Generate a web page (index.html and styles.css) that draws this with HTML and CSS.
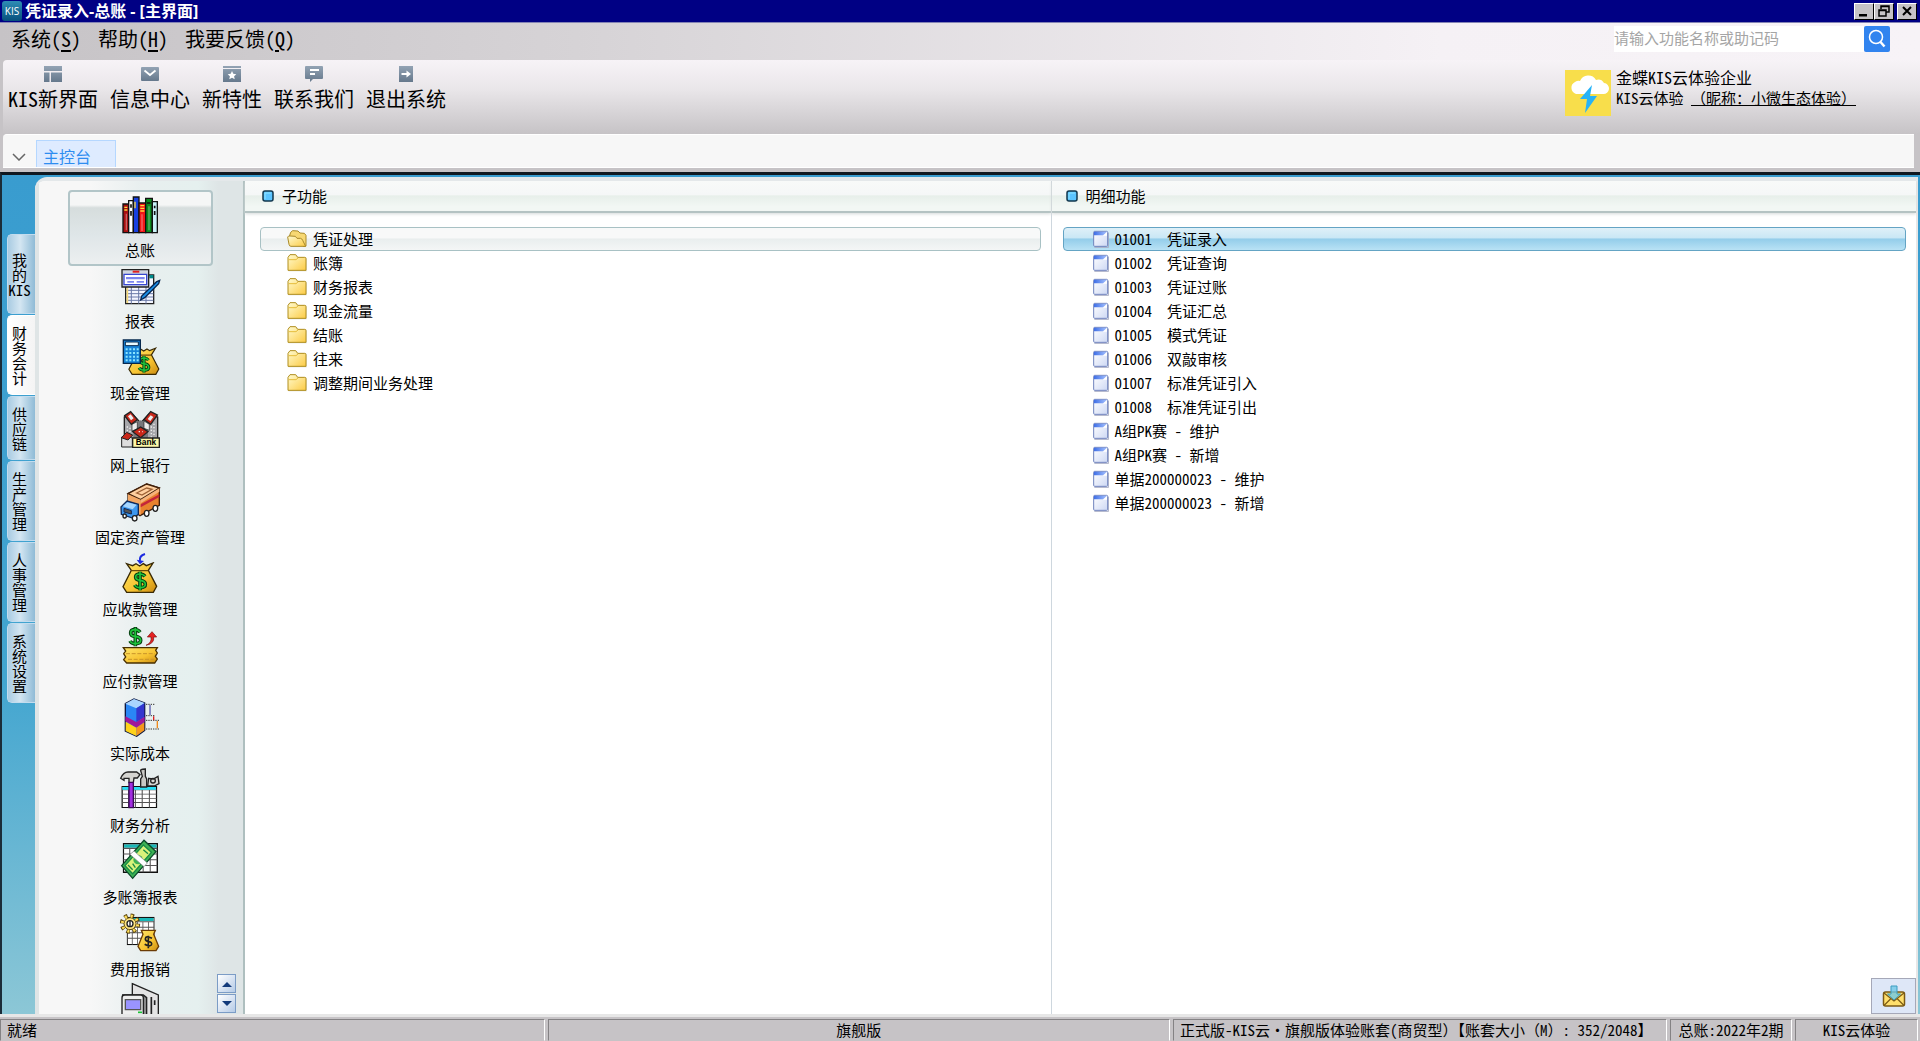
FILE: index.html
```html
<!DOCTYPE html>
<html lang="zh-CN">
<head>
<meta charset="utf-8">
<title>凭证录入-总账 - [主界面]</title>
<link rel="stylesheet" href="styles.css">
</head>
<body>
<svg class="defs" aria-hidden="true">
  <defs>
    <linearGradient id="slate" x1="0" y1="0" x2="0" y2="1"><stop offset="0" stop-color="#93a3b4"/><stop offset="1" stop-color="#65788c"/></linearGradient>
    <linearGradient id="gold" x1="0" y1="0" x2="1" y2="1"><stop offset="0" stop-color="#ffe66a"/><stop offset=".6" stop-color="#f7c331"/><stop offset="1" stop-color="#c98a10"/></linearGradient>
    <linearGradient id="folderFill" x1="0" y1="0" x2="1" y2="1"><stop offset="0" stop-color="#fffbd0"/><stop offset="1" stop-color="#fccb45"/></linearGradient>
    <linearGradient id="docFill" x1="0" y1="0" x2="1" y2="1"><stop offset="0" stop-color="#ffffff"/><stop offset="1" stop-color="#cdd8f4"/></linearGradient>
    <linearGradient id="docFlap" x1="0" y1="0" x2="1" y2="0"><stop offset="0" stop-color="#3f6fe6"/><stop offset="1" stop-color="#a9c4ff"/></linearGradient>
    <symbol id="folder" viewBox="0 0 60 54">
      <path d="M5 52V12q0-4 4-6l4-4h15l5 7h21q5 0 5 5v38z" fill="#b9b9a8" opacity=".5"/>
      <path d="M3 49V10l6-8h17l6 8h21q4 0 4 4v35z" fill="url(#folderFill)" stroke="#b08e1e" stroke-width="3"/>
      <path d="M5 17h22l6-5" fill="none" stroke="#e5bd3c" stroke-width="3"/>
    </symbol>
    <symbol id="folder-open" viewBox="0 0 60 54">
      <path d="M7 20l4-13 6-5 16 1 6 6 13 1 5 6v32l-6 2z" fill="#f7d873" stroke="#a98a2a" stroke-width="3"/>
      <path d="M2 21q2-4 7-3l16 1 5 6h11q4 1 6 6l9 18H12q-5 0-6-6z" fill="url(#folderFill)" stroke="#a98a2a" stroke-width="3"/>
    </symbol>
    <symbol id="doc" viewBox="0 0 48 54">
      <path d="M4 52h43V8" fill="none" stroke="#a9aec4" stroke-width="3"/>
      <rect x="2" y="4" width="42" height="45" rx="3" fill="url(#docFill)" stroke="#6f83bd" stroke-width="3"/>
      <path d="M3 5h40L30 16H3z" fill="url(#docFlap)"/>
      <path d="M42 6v11H30z" fill="#fff"/>
    </symbol>
    <symbol id="bullet" viewBox="0 0 12 12"><rect x="1" y="1" width="10" height="10" rx="2" fill="#5bc4ff" stroke="#12374d" stroke-width="1.5"/><path d="M3 9V3h6" stroke="#8fe3ff" fill="none"/></symbol>
    <symbol id="bag" viewBox="0 0 108 92">
      <path d="M28 24L14 4l18 6 10-6 11 7 11-7 9 6 20-8-14 22 25 48-10 18H14L3 73z" fill="url(#gold)" stroke="#3a2a05" stroke-width="4"/>
      <path d="M28 25h51" stroke="#6b4a08" stroke-width="4"/>
      <path d="M69 42q-5-7-15-7-13 0-13 9 0 8 13 10 16 2 16 12 0 10-15 10-13 0-17-8M54 28v56" fill="none" stroke="#063f10" stroke-width="11"/>
      <path d="M69 42q-5-7-15-7-13 0-13 9 0 8 13 10 16 2 16 12 0 10-15 10-13 0-17-8M54 28v56" fill="none" stroke="#1fc23c" stroke-width="5"/>
    </symbol>
    <symbol id="sheet" viewBox="0 0 100 84" preserveAspectRatio="none">
      <path d="M2 2h96v80H2z" fill="#fff" stroke="#111" stroke-width="4"/>
      <path d="M4 4h92v9H4z" fill="#18b7b7"/>
      <path d="M2 15h96M2 31h96M2 47h96M2 63h96M20 15v67M39 15v67M58 15v67M78 15v67" stroke="#555" stroke-width="3"/>
    </symbol>
  </defs>
</svg>

<header class="titlebar">
  <span class="app-icon">KIS</span>
  <h1 class="title">凭证录入-总账 - [主界面]</h1>
  <div class="window-controls">
    <button class="winbtn" aria-label="最小化"><svg viewBox="0 0 16 12"><path d="M3 9h8v2.500H3z"/></svg></button>
    <button class="winbtn" aria-label="还原"><svg viewBox="0 0 16 12"><path d="M5 4V1h8v6h-3M5 1.500h8" fill="none" stroke="#000" stroke-width="1.500"/><path d="M3 5h7v6H3zM3 5.500h7" fill="none" stroke="#000" stroke-width="1.500"/></svg></button>
    <button class="winbtn winbtn-close" aria-label="关闭"><svg viewBox="0 0 16 12"><path d="M4 2l8 8M12 2l-8 8" stroke="#000" stroke-width="2"/></svg></button>
  </div>
</header>

<div class="menubar">
  <nav class="menus">
    <button class="menu">系统(<u>S</u>)</button>
    <button class="menu">帮助(<u>H</u>)</button>
    <button class="menu">我要反馈(<u>Q</u>)</button>
  </nav>
  <form class="search">
    <input class="search-input" type="text" aria-label="搜索功能" placeholder="请输入功能名称或助记码">
    <button class="search-btn" type="button" aria-label="搜索"><svg viewBox="0 0 26 26"><circle cx="12" cy="11" r="6.500" fill="none" stroke="#fff" stroke-width="1.500"/><path d="M16.500 16l4 4.500" stroke="#fff" stroke-width="2.500"/></svg></button>
  </form>
</div>

<div class="toolbar">
  <div class="tools">
    <button class="tool"><svg viewBox="0 0 18 16"><path d="M0 0h18v5H0zM0 6.500h5.500V16H0zM7 6.500h11V16H7z" fill="url(#slate)"/></svg><span>KIS新界面</span></button>
    <button class="tool"><svg viewBox="0 0 18 16"><rect y="1" width="18" height="14" rx="1" fill="url(#slate)"/><path d="M3.500 4.500L9 9l5.500-4.500" fill="none" stroke="#fff" stroke-width="1.800"/></svg><span>信息中心</span></button>
    <button class="tool"><svg viewBox="0 0 18 16"><path d="M0 0h18v2H0zM0 3h18v13H0z" fill="url(#slate)"/><path d="M9 5l1.300 2.800 3 .4-2.200 2.100.6 3L9 11.800l-2.700 1.500.6-3-2.200-2.100 3-.4z" fill="#fff"/></svg><span>新特性</span></button>
    <button class="tool"><svg viewBox="0 0 18 16"><path d="M1 0h16q1 0 1 1v11q0 1-1 1H8l-3 3v-3H1q-1 0-1-1V1q0-1 1-1z" fill="url(#slate)"/><path d="M5 4h9M5 8h5" stroke="#fff" stroke-width="1.800"/></svg><span>联系我们</span></button>
    <button class="tool"><svg viewBox="0 0 18 16"><path d="M2 0h14v16H2z" fill="url(#slate)"/><path d="M4.500 8h6" stroke="#fff" stroke-width="2"/><path d="M9.500 4.500L14 8l-4.500 3.500z" fill="#fff"/></svg><span>退出系统</span></button>
  </div>
  <div class="account">
    <svg class="avatar" viewBox="0 0 46 46"><path d="M0 0h46v46H0z" fill="#f8de4b"/><path d="M11 24a6.500 6.500 0 0 1-1-12q3-2 5-1a9 9 0 0 1 16-1 7 7 0 0 1 8 3 5.500 5.500 0 0 1-1 11z" fill="#fff"/><path d="M27 15L15 29h7l-2 14 12-17h-7z" fill="#27b3f7"/></svg>
    <div class="account-text">
      <div class="company">金蝶KIS云体验企业</div>
      <div class="user">KIS云体验 <a href="#" class="nick">（昵称：小微生态体验）</a></div>
    </div>
  </div>
</div>

<nav class="tabbar">
  <button class="tab-menu" aria-label="页签列表"><svg viewBox="0 0 14 8"><path d="M1 1l6 6 6-6" fill="none" stroke="#666" stroke-width="1.500"/></svg></button>
  <button class="tab">主控台</button>
</nav>

<main class="workspace">
  <nav class="rail">
    <button class="rail-tab">我<br>的<br>KIS</button>
    <button class="rail-tab rail-active">财<br>务<br>会<br>计</button>
    <button class="rail-tab rail-short">供<br>应<br>链</button>
    <button class="rail-tab">生<br>产<br>管<br>理</button>
    <button class="rail-tab">人<br>事<br>管<br>理</button>
    <button class="rail-tab">系<br>统<br>设<br>置</button>
  </nav>

  <div class="stage">
    <aside class="sidebar">
      <div class="modules">
        <button class="module module-active"><svg viewBox="0 0 120 120"><g stroke="#111" stroke-width="4"><path d="M9 27h17v86H9z" fill="#a80f0f"/><path d="M26 17h14v96H26z" fill="#fff"/><path d="M40 6h17v107H40z" fill="#1740e0"/><path d="M57 24h20v89H57z" fill="#f01818"/><path d="M77 10h20v103H77z" fill="#0a8a1e"/><path d="M97 20h15v93H97z" fill="#c9f4fb"/></g><path d="M13 37h9M13 45h9M61 32h12M61 40h12M61 48h12M45 20v20" stroke="#ffd83d" stroke-width="4"/><path d="M33 28v10M33 48v14M81 24h11M104 32v8M104 48v12" stroke="#111" stroke-width="5"/><path d="M19 56v50M66 58v50M87 34v72" stroke="#fff" stroke-opacity=".35" stroke-width="4"/></svg><span>总账</span></button>
        <button class="module"><svg viewBox="0 0 120 120"><path d="M17 24h84v86H17z" fill="#f4f6ff" stroke="#222" stroke-width="4"/><path d="M88 24h12v10H88z" fill="#008a8a"/><path d="M18 70h82M18 80h82M18 90h82M18 100h82M34 60v50M56 60v50M78 34v76" stroke="#6a79a8" stroke-width="3"/><path d="M22 62v46" stroke="#f5d977" stroke-width="5"/><path d="M6 8h80v52H6z" fill="#cfd5e0" stroke="#222" stroke-width="4"/><path d="M12 22h68v31H12z" fill="#fff" stroke="#3847d0" stroke-width="4"/><path d="M38 14h20" stroke="#e02020" stroke-width="6"/><path d="M18 30h56v7H18zM22 42h20v5H22zM50 42h22v5H50z" fill="#7d86ef"/><path d="M110 44l9-4-3 10L74 92l-12 7 3-12z" fill="#1c8fe8" stroke="#082650" stroke-width="4"/></svg><span>报表</span></button>
        <button class="module"><svg viewBox="0 0 120 120"><use href="#bag" x="24" y="20" width="96" height="94"/><path d="M10 3h51v70H10z" fill="#1684d8" stroke="#06294e" stroke-width="4"/><path d="M16 9h39v11H16z" fill="#e8fbff" stroke="#06294e" stroke-width="3"/><path d="M17 31h40M17 42h40M17 53h40M17 64h40" stroke="#8be5ff" stroke-width="6" stroke-dasharray="6 5"/></svg><span>现金管理</span></button>
        <button class="module"><svg viewBox="0 0 120 120"><path d="M13 18l25-8 24 26 24-26 27 8v70H13z" fill="#a6a6aa" stroke="#222" stroke-width="4"/><path d="M40 38l22-10 22 10v44H40z" fill="#77777b"/><path d="M36 40l16-8v22l-16 6zM72 30l16 10v18l-16-6z" fill="#ececec" stroke="#222" stroke-width="2"/><g fill="#c8281a" stroke="#222" stroke-width="4"><path d="M14 14L32 2l20 24-18 14z"/><path d="M72 26L92 2l20 10-20 28z"/><path d="M38 62l24-14 22 14-22 18z"/></g><path d="M24 16l8-6 9 12-8 6zM83 24l9-11 8 5-9 12z" fill="#ececec"/><path d="M56 62h12M22 46v38M30 50v34M102 38v38M94 46v34" stroke="#eee" stroke-width="4" stroke-dasharray="4 6"/><path d="M5 78l17-6 15 10v26H5z" fill="#ddd" stroke="#222" stroke-width="3"/><path d="M4 80l16-16 18 8-14 15z" fill="#c8281a" stroke="#222" stroke-width="3"/><path d="M38 81h80v28H38z" fill="#fff9a8" stroke="#222" stroke-width="4"/><text x="78" y="103" class="bank-text">Bank</text></svg><span>网上银行</span></button>
        <button class="module"><svg viewBox="0 0 120 120"><g stroke="#41200a" stroke-width="4"><path d="M24 32l56-29 38 12v52L60 98 24 72z" fill="#e8822e"/><path d="M24 32l56-29 38 12-56 35z" fill="#ffd0a0"/></g><path d="M24 34l38 16v46L24 74z" fill="#f3a866"/><path d="M62 50l56-34v10L62 61z" fill="#f6b37a"/><path d="M62 64l56-30v8L62 73z" fill="#c4253a"/><path d="M50 30l30-15 16 4-30 17z" fill="none" stroke="#9c6034" stroke-width="4"/><path d="M3 72l18-18 34 10v30L40 106 4 94z" fill="#3e97ee" stroke="#102a5a" stroke-width="4"/><path d="M8 70l14-12 28 7-12 14z" fill="#a6d6ff"/><path d="M12 76l22 7v10l-22-6z" fill="#555" stroke="#102a5a" stroke-width="3"/><g fill="#fff" stroke="#222" stroke-width="4"><ellipse cx="80" cy="91" rx="7" ry="9"/><ellipse cx="106" cy="76" rx="7" ry="9"/><ellipse cx="44" cy="106" rx="7" ry="8"/><ellipse cx="14" cy="99" rx="5" ry="6"/></g></svg><span>固定资产管理</span></button>
        <button class="module"><svg viewBox="0 0 120 120"><use href="#bag" x="6" y="21" width="108" height="94"/><path d="M75-3Q57 2 60 18" fill="none" stroke="#1c2be0" stroke-width="6"/><path d="M50 14l10 14 12-10z" fill="#1c2be0"/></svg><span>应收款管理</span></button>
        <button class="module"><svg viewBox="0 0 120 120"><path d="M60 16q-5-8-15-8-13 0-13 10t14 10q16 2 16 12t-16 10q-12 0-16-8M46 0v58" fill="none" stroke="#063f10" stroke-width="11"/><path d="M60 16q-5-8-15-8-13 0-13 10t14 10q16 2 16 12t-16 10q-12 0-16-8M46 2v54" fill="none" stroke="#1fc23c" stroke-width="5"/><path d="M78 55q18-8 15-25H82l14-16 14 16h-9q3 20-23 25z" fill="#e52222" stroke="#7a0a0a" stroke-width="2"/><path d="M10 62h102l-5 8 5 8-6 10 6 8-8 12H20l-9-10 6-8-6-10 6-8z" fill="url(#gold)" stroke="#4a3000" stroke-width="4"/><path d="M18 80h86M24 97h78" stroke="#c9952a" stroke-width="3" stroke-dasharray="12 5"/></svg><span>应付款管理</span></button>
        <button class="module"><svg viewBox="0 0 120 120"><path d="M16 14L42 0l32 12v82l-24 18-34-16z" fill="#2a86f5" stroke="#0c1640" stroke-width="4"/><path d="M16 14L42 0l32 12-25 16z" fill="#a9d4ff"/><path d="M49 28l24-15v42L49 69z" fill="#3436cf"/><path d="M16 52l33 17 25-16v16L49 86 16 67z" fill="#a0189a"/><path d="M17 68l32 18v25L17 96z" fill="#ffd21a"/><path d="M49 86l24-16v24l-24 17z" fill="#f5961c"/><path d="M78 16h26M78 50h26M78 64h40M78 90h40" stroke="#333" stroke-width="3" stroke-dasharray="4 3"/><path d="M90 18v30" stroke="#2a2a9a" stroke-width="3"/><path d="M101 52v12" stroke="#e02020" stroke-width="4"/><path d="M112 66v22" stroke="#f08a1c" stroke-width="4"/></svg><span>实际成本</span></button>
        <button class="module"><svg viewBox="0 0 120 120"><use href="#sheet" x="4" y="45" width="108" height="66"/><path d="M7 48h101v8H7z" fill="#27dff5"/><path d="M63 2q-5-8 13-8v22l4 8v24H62V24l5-8z" fill="#c8c8c4" stroke="#222" stroke-width="4"/><path d="M86 22l14 2 14-8 3 22-14 7-20-1z" fill="#d8d8d4" stroke="#222" stroke-width="4"/><circle cx="99" cy="29" r="7" fill="none" stroke="#222" stroke-width="4"/><path d="M2 22Q10 3 24 3h26l10 8-8 10H42l-2 14H27V22H12v6z" fill="#d5d5d1" stroke="#222" stroke-width="4"/><path d="M27 34h13v76H27z" fill="#a22ee0" stroke="#3a0a5a" stroke-width="4"/></svg><span>财务分析</span></button>
        <button class="module"><svg viewBox="0 0 120 120"><use href="#sheet" x="8" y="0" width="106" height="90"/><path d="M5 68L72-8l36 34-70 80z" fill="#3db254" stroke="#0a4a2a" stroke-width="4"/><path d="M15 68L70 6l24 22-56 64z" fill="#d9f27a" stroke="#178a46" stroke-width="4"/><circle cx="54" cy="50" r="14" fill="#3db254"/><path d="M24 66l14 14M70 20l14 12M38 62l8 12" stroke="#178a46" stroke-width="4"/><path d="M30 34l12-10 40 36-10 11z" fill="#fff" stroke="#888" stroke-width="2"/></svg><span>多账簿报表</span></button>
        <button class="module"><svg viewBox="0 0 120 120"><use href="#sheet" x="20" y="5" width="84" height="86"/><circle cx="30" cy="26" r="24" fill="none" stroke="#59430a" stroke-width="13" stroke-dasharray="10 9"/><circle cx="30" cy="26" r="18" fill="#ffe680" stroke="#59430a" stroke-width="3"/><circle cx="30" cy="26" r="23" fill="none" stroke="#ffdf5a" stroke-width="9" stroke-dasharray="6 12" stroke-dashoffset="-2"/><circle cx="30" cy="26" r="9" fill="#fff" stroke="#222" stroke-width="4"/><path d="M30 17v18" stroke="#222" stroke-width="4"/><path d="M64 46h42l-5 12 15 36-8 13H62l-8-13 15-36z" fill="url(#gold)" stroke="#6b3c05" stroke-width="4"/><path d="M96 70q-20-10-20 2 0 6 10 8 12 2 8 10-6 6-20-2M85 62v38" fill="none" stroke="#222" stroke-width="5"/></svg><span>费用报销</span></button>
        <button class="module" aria-label="更多模块"><svg viewBox="0 0 120 120"><path d="M37-10l78 34v96H37z" fill="#e4e4e4" stroke="#222" stroke-width="4"/><path d="M94 30v60h20M104 40v14" stroke="#222" stroke-width="5" fill="none"/><path d="M8 24h62l10 8v70H8z" fill="#888" stroke="#222" stroke-width="4"/><rect x="6" y="24" width="64" height="76" rx="8" fill="#eee" stroke="#222" stroke-width="4"/><path d="M16 38h46v30H16z" fill="#9a94ff" stroke="#555" stroke-width="4"/><path d="M54 76h12" stroke="#19c434" stroke-width="5"/></svg></button>
      </div>
      <div class="scrollers">
        <button class="scroller" aria-label="向上"><svg viewBox="0 0 10 6"><path d="M0 6l5-5 5 5z"/></svg></button>
        <button class="scroller" aria-label="向下"><svg viewBox="0 0 10 6"><path d="M0 0l5 5 5-5z"/></svg></button>
      </div>
    </aside>

    <section class="panel panel-sub">
      <h2 class="panel-head"><svg viewBox="0 0 12 12"><use href="#bullet"/></svg>子功能</h2>
      <ul class="list">
        <li><button class="row row-current"><svg class="ico-folder"><use href="#folder-open"/></svg>凭证处理</button></li>
        <li><button class="row"><svg class="ico-folder"><use href="#folder"/></svg>账簿</button></li>
        <li><button class="row"><svg class="ico-folder"><use href="#folder"/></svg>财务报表</button></li>
        <li><button class="row"><svg class="ico-folder"><use href="#folder"/></svg>现金流量</button></li>
        <li><button class="row"><svg class="ico-folder"><use href="#folder"/></svg>结账</button></li>
        <li><button class="row"><svg class="ico-folder"><use href="#folder"/></svg>往来</button></li>
        <li><button class="row"><svg class="ico-folder"><use href="#folder"/></svg>调整期间业务处理</button></li>
      </ul>
    </section>

    <section class="panel panel-detail">
      <h2 class="panel-head"><svg viewBox="0 0 12 12"><use href="#bullet"/></svg>明细功能</h2>
      <ul class="list">
        <li><button class="row row-selected"><svg class="ico-doc"><use href="#doc"/></svg>01001  凭证录入</button></li>
        <li><button class="row"><svg class="ico-doc"><use href="#doc"/></svg>01002  凭证查询</button></li>
        <li><button class="row"><svg class="ico-doc"><use href="#doc"/></svg>01003  凭证过账</button></li>
        <li><button class="row"><svg class="ico-doc"><use href="#doc"/></svg>01004  凭证汇总</button></li>
        <li><button class="row"><svg class="ico-doc"><use href="#doc"/></svg>01005  模式凭证</button></li>
        <li><button class="row"><svg class="ico-doc"><use href="#doc"/></svg>01006  双敲审核</button></li>
        <li><button class="row"><svg class="ico-doc"><use href="#doc"/></svg>01007  标准凭证引入</button></li>
        <li><button class="row"><svg class="ico-doc"><use href="#doc"/></svg>01008  标准凭证引出</button></li>
        <li><button class="row"><svg class="ico-doc"><use href="#doc"/></svg>A组PK赛 - 维护</button></li>
        <li><button class="row"><svg class="ico-doc"><use href="#doc"/></svg>A组PK赛 - 新增</button></li>
        <li><button class="row"><svg class="ico-doc"><use href="#doc"/></svg>单据200000023 - 维护</button></li>
        <li><button class="row"><svg class="ico-doc"><use href="#doc"/></svg>单据200000023 - 新增</button></li>
      </ul>
      <button class="mail" aria-label="消息"><svg viewBox="0 0 24 24"><rect x="1.500" y="8" width="21" height="14" rx="2" fill="#ffdf6b" stroke="#7b5a14" stroke-width="1.500"/><path d="M2 9l10 8 10-8M2 21.500l7-7M22 21.500l-7-7" fill="none" stroke="#7b5a14" stroke-width="1.200"/><path d="M9 2h6v8h3.500L12 16 5.500 10H9z" fill="#6fc8e6" fill-opacity=".8" stroke="#3a9cc0"/></svg></button>
    </section>
  </div>
</main>

<footer class="statusbar">
  <span class="cell cell-ready">就绪</span>
  <span class="cell cell-edition">旗舰版</span>
  <span class="cell cell-book">正式版-KIS云・旗舰版体验账套(商贸型）【账套大小（M）: 352/2048】</span>
  <span class="cell cell-period">总账:2022年2期</span>
  <span class="cell cell-user">KIS云体验</span>
</footer>
</body>
</html>
```
FILE: styles.css
```css
* { box-sizing: border-box; }

body {
  margin: 0;
  height: 100vh;
  display: flex;
  flex-direction: column;
  overflow: hidden;
  background: #c6c3c6;
  color: #000;
  font: 15px/20px "Noto Sans Mono CJK SC", "Noto Sans CJK SC", sans-serif;
}

button, input {
  font: inherit;
  color: inherit;
  margin: 0;
  padding: 0;
  border: 0;
  background: none;
}

svg { display: block; flex: none; }
.defs { position: absolute; width: 0; height: 0; }
h1, h2, ul { margin: 0; padding: 0; font-size: inherit; font-weight: inherit; }
ul { list-style: none; }

/* Title bar */
.titlebar {
  flex: none;
  height: 23px;
  display: flex;
  align-items: center;
  gap: 3px;
  padding: 0 3px 0 2px;
  background: #000084;
  border-bottom: 1px solid #8484b5;
}
.app-icon {
  width: 20px;
  height: 20px;
  border-radius: 3px;
  background: linear-gradient(#2e8db5, #07507c);
  color: #fff;
  font: 10px/20px "Open Sans", sans-serif;
  text-align: center;
}
.title {
  flex: 1;
  color: #fff;
  font: bold 16px/20px "Open Sans", "Noto Sans CJK SC", sans-serif;
}
.window-controls { display: flex; }
.winbtn {
  width: 20px;
  height: 17px;
  display: grid;
  place-items: center;
  background: #c6c3c6;
  border: 1px solid;
  border-color: #fff #000 #000 #fff;
}
.winbtn svg { width: 16px; height: 12px; }
.winbtn-close { margin-left: 3px; }

/* Menu bar */
.menubar {
  flex: none;
  height: 37px;
  display: flex;
  justify-content: space-between;
  padding: 3px 30px 0 11px;
  background: linear-gradient(90deg, #c6c3c6, #d6d3d6 30%, #f5f1f5 75%, #f7f3f7);
}
.menus { display: flex; gap: 17px; height: 26px; }
.menu { font-size: 20px; line-height: 26px; }
.menu u { text-underline-offset: 3px; }
.search { display: flex; height: 26px; }
.search-input {
  width: 250px;
  padding-bottom: 3px;
  background: #fff;
}
.search-input::placeholder { color: #a5a5a5; opacity: 1; }
.search-btn {
  width: 26px;
  background: #3184ef;
  border-radius: 2px;
}

/* Toolbar */
.toolbar {
  flex: none;
  height: 74px;
  margin-left: 3px;
  display: flex;
  justify-content: space-between;
  padding: 6px 64px 0 5px;
  border-top-left-radius: 4px;
  background: linear-gradient(#f7f3f7, #e9e6e9 40%, #c6c3c6);
}
.tools { display: flex; align-items: flex-start; gap: 12px; }
.tool {
  display: flex;
  flex-direction: column;
  align-items: center;
  gap: 3px;
  font-size: 20px;
  line-height: 28px;
}
.tool svg { width: 18px; height: 16px; }
.account { display: flex; gap: 5px; }
.avatar { width: 46px; height: 46px; margin-top: 4px; }
.company { font-size: 16px; line-height: 22px; }
.nick { color: inherit; }

/* Page tabs */
.tabbar {
  flex: none;
  height: 34px;
  margin: 0 6px 0 3px;
  padding: 5px 0 0 9px;
  display: flex;
  gap: 10px;
  background: #f7f7f7;
  border-top: 1px solid #fff;
  border-bottom: 1px solid #fff;
  border-top-left-radius: 4px;
}
.tab-menu { width: 14px; padding-top: 6px; }
.tab-menu svg { width: 14px; height: 8px; }
.tab {
  width: 80px;
  padding-left: 6px;
  padding-top: 3px;
  text-align: left;
  font-size: 16px;
  color: #2e8df0;
  background: #deebff;
  border: 1px solid #b5d7ff;
  border-bottom: 0;
}

/* Workspace */
.workspace {
  flex: 1;
  min-height: 0;
  margin-top: 4px;
  display: flex;
  border-top: 3px solid #101820;
  border-left: 2px solid #1b2c38;
  background: linear-gradient(#399ccf, #42a5d0 60%, #8cc7d6);
}
.rail {
  flex: none;
  width: 33px;
  padding: 59px 0 0 5px;
  display: flex;
  flex-direction: column;
  gap: 1px;
}
.rail-tab {
  flex: none;
  height: 80px;
  padding: 0 4px 0 0;
  line-height: 15px;
  border: 1px solid #c3dcee;
  border-right: 0;
  border-radius: 5px 0 0 5px;
  background: linear-gradient(90deg, #a9cbe2, #d4e6f2 45%, #8fbbd6);
}
.rail-short { height: 64px; }
.rail-active { background: linear-gradient(90deg, #fff, #f4f4f4); border-color: #fff; }

.stage {
  flex: 1;
  min-width: 0;
  display: flex;
  margin: 2px 2px 0 0;
  border-top: 4px solid #e4e8ea;
  border-top-left-radius: 12px;
  background: #fff;
  overflow: hidden;
}
.sidebar {
  flex: none;
  width: 210px;
  position: relative;
  overflow: hidden;
  padding-top: 9px;
  padding-right: 2px;
  border-left: 4px solid #dfe5e6;
  border-right: 2px solid #aebfbf;
  background: linear-gradient(90deg, #f7f7f7 25%, #e8efef 50%, #e5f0ef 78%, #dee5e6 88%);
}
.modules { display: flex; flex-direction: column; align-items: center; }
.module {
  flex: none;
  width: 145px;
  height: 76px;
  margin-bottom: -4px;
  display: flex;
  flex-direction: column;
  align-items: center;
  gap: 4px;
  padding-top: 4px;
  border: 1px solid transparent;
  border-radius: 4px;
}
.module svg { width: 40px; height: 40px; overflow: visible; }
.module-active {
  border: 2px solid #b2c5c8;
  padding-top: 3px;
  gap: 5px;
  background: linear-gradient(#f5f6f6 18%, #d6dddd 22%, #dfe6e8 60%, #eceff0);
}
.bank-text { font: bold 25px "Liberation Sans", sans-serif; text-anchor: middle; }
.scrollers {
  position: absolute;
  right: 7px;
  bottom: 1px;
  display: flex;
  flex-direction: column;
  gap: 1px;
}
.scroller {
  width: 19px;
  height: 19px;
  display: grid;
  place-items: center;
  border: 1px solid #7b9cc6;
  background: linear-gradient(135deg, #fff, #b5cbe7);
}
.scroller svg { width: 10px; height: 6px; fill: #123a7b; }

.panel { min-width: 0; position: relative; }
.panel-sub { flex: 807; border-right: 1px solid #ced7de; }
.panel-detail { flex: 866; border-right: 2px solid #e7e7e7; }
.panel-head {
  height: 32px;
  display: flex;
  align-items: center;
  gap: 8px;
  padding-left: 17px;
  background: linear-gradient(#f8faf9, #f5f7f7 45%, #e7efea 50%, #f2f7f4 85%);
  border-bottom: 2px solid #b5c3c3;
  box-shadow: 0 1px 3px #d5dada;
}
.panel-head svg { width: 12px; height: 12px; }
.panel-detail .panel-head { padding-left: 14px; }
.list { padding: 14px 10px 0 15px; }
.panel-detail .list { padding-left: 11px; padding-right: 10px; }
.row {
  width: 100%;
  height: 24px;
  display: flex;
  align-items: center;
  gap: 6px;
  padding-left: 26px;
  white-space: pre;
  border: 1px solid transparent;
  border-radius: 4px;
}
.panel-detail .row { padding-left: 29px; }
.row-current {
  border-color: #a8c1c4;
  background: linear-gradient(#f8f9f9 45%, #e9eeee 50%, #f4f6f6);
}
.row-selected {
  border-color: #64a4c4;
  background: linear-gradient(#dff0f8, #c9e7f5 45%, #93cdea 50%, #b9e2f5);
}
.ico-folder { width: 20px; height: 18px; }
.ico-doc { width: 16px; height: 18px; }
.mail {
  position: absolute;
  right: 0;
  bottom: 0;
  width: 45px;
  height: 36px;
  display: grid;
  place-items: center;
  background: #dee7f7;
  border: 1px solid #a5a8b8;
}
.mail svg { width: 24px; height: 24px; }

/* Status bar */
.statusbar {
  flex: none;
  height: 27px;
  padding: 2px 2px 0 0;
  display: flex;
  gap: 3px;
  border-top: 3px solid #e7e7e7;
  background: #c6c3c6;
}
.cell {
  padding: 0 6px;
  overflow: hidden;
  white-space: pre;
  text-align: center;
  border: 1px solid;
  border-color: #848284 #fff #c6c3c6 #848284;
}
.cell-ready { flex: 544; text-align: left; }
.cell-edition { flex: 624; }
.cell-book { flex: none; width: 494px; text-align: left; }
.cell-period { flex: none; width: 122px; }
.cell-user { flex: none; width: 123px; }
```
